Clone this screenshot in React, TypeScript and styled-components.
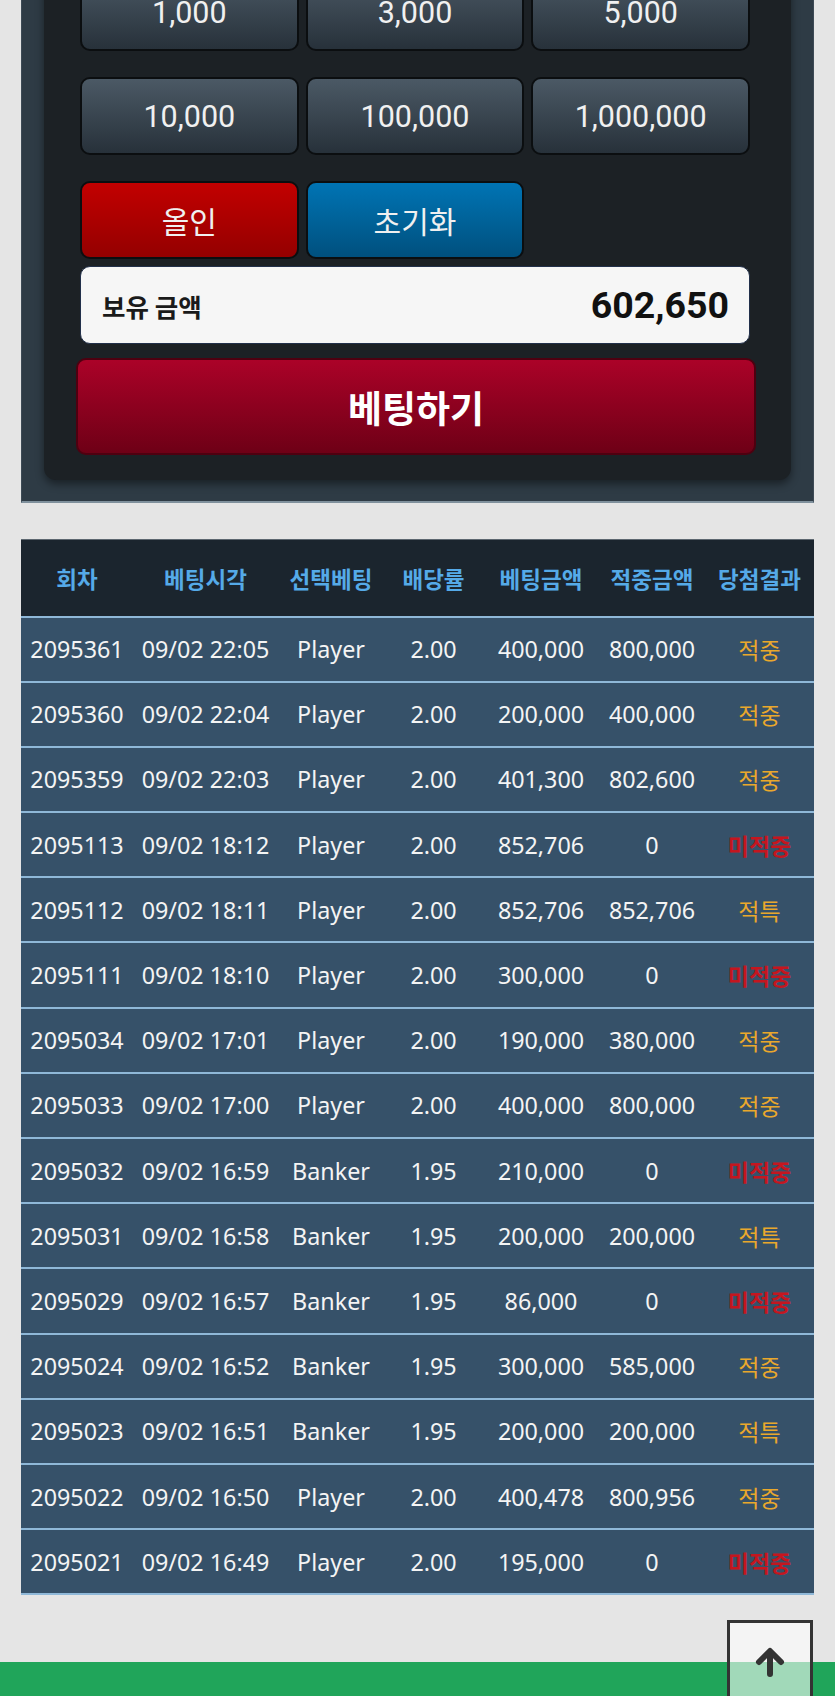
import React from 'react';
import styled, { createGlobalStyle } from 'styled-components';

const GlobalStyle = createGlobalStyle`
  * { box-sizing: border-box; }
  html, body {
    margin: 0;
    padding: 0;
    background: #e5e5e5;
    font-family: "Noto Sans", "Noto Sans CJK KR", sans-serif;
  }
`;

const Page = styled.div`
  margin-top: -79px;
  overflow: hidden;
`;

const BetPanel = styled.section`
  margin: 0 21px;
  padding: 22px 22px 21px;
  background: #2e3b45;
  border-left: 1px solid #3d4a55;
  border-right: 1px solid #3d4a55;
  border-bottom: 2px solid #7f909c;
`;

const BetInner = styled.div`
  padding: 30px 41px 25px 36px;
  background: #1c2125;
  border-radius: 12px;
  box-shadow: 0 4px 8px rgba(0, 0, 0, 0.45);
`;

const ChipGrid = styled.div`
  display: grid;
  grid-template-columns: repeat(3, 1fr);
  column-gap: 7px;
  row-gap: 26px;
`;

const tones = {
  gray: 'linear-gradient(to bottom, #4b5965, #27313a)',
  red: 'linear-gradient(to bottom, #c20000, #940000)',
  blue: 'linear-gradient(to bottom, #0074b4, #00507e)',
};

const ChipButton = styled.button<{ $tone: keyof typeof tones }>`
  height: 78px;
  border: 2px solid #0b0e10;
  border-radius: 10px;
  background: ${(p) => tones[p.$tone]};
  color: #f0f0f0;
  font-family: ${(p) =>
    p.$tone === 'gray' ? '"Roboto", sans-serif' : '"Noto Sans CJK KR", sans-serif'};
  font-size: ${(p) => (p.$tone === 'gray' ? '30.5px' : '30px')};
  font-weight: 400;
  display: flex;
  align-items: center;
  justify-content: center;
  padding: 0;
`;

const BalanceBox = styled.div`
  margin-top: 7px;
  height: 78px;
  padding: 0 20px 0 21px;
  background: #f6f6f6;
  border: 1px solid #22304a;
  border-radius: 10px;
  display: flex;
  align-items: center;
  justify-content: space-between;
`;

const BalanceLabel = styled.span`
  font-family: "Noto Sans CJK KR", sans-serif;
  font-weight: 700;
  font-size: 25.5px;
  color: #1a1a1a;
`;

const BalanceValue = styled.span`
  font-family: "Roboto", sans-serif;
  font-weight: 700;
  font-size: 37.5px;
  color: #111;
`;

const BetButton = styled.button`
  display: block;
  width: calc(100% + 10px);
  margin: 14px -6px 0 -4px;
  height: 97px;
  border: 2px solid #4e0010;
  border-radius: 10px;
  background: linear-gradient(to bottom, #ab0228, #6e0016);
  color: #fff;
  font-family: "Noto Sans CJK KR", sans-serif;
  font-weight: 700;
  font-size: 37px;
`;

const HistoryTable = styled.table`
  margin: 36px 21px 0;
  width: 793px;
  table-layout: fixed;
  border-collapse: collapse;
  border-top: 1px solid #5d6770;
`;

const HeadCell = styled.th`
  height: 77px;
  background: #1b252e;
  color: #55aae8;
  font-family: "Noto Sans CJK KR", sans-serif;
  font-weight: 700;
  font-size: 22.5px;
  text-align: center;
  padding: 0;
  border-bottom: 2px solid #8fb8d8;
  white-space: nowrap;
`;

const Row = styled.tr`
  background: #365169;
  border-bottom: 2px solid #8fb8d8;
`;

const Cell = styled.td`
  height: 65.2px;
  padding: 0;
  text-align: center;
  color: #f4f4f4;
  font-family: "Noto Sans", "Noto Sans CJK KR", sans-serif;
  font-size: 23.3px;
  white-space: nowrap;
`;

const resultColors = {
  '적중': '#eaa82c',
  '적특': '#eaa82c',
  '미적중': '#c4161f',
};

const ResultCell = styled(Cell)<{ $result: keyof typeof resultColors }>`
  color: ${(p) => resultColors[p.$result]};
  font-family: "Noto Sans CJK KR", sans-serif;
  font-size: 23px;
  font-weight: ${(p) => (p.$result === '미적중' ? 700 : 400)};
`;

const Footer = styled.footer`
  margin-top: 67px;
  height: 40px;
  background: #20a55a;
`;

const TopButton = styled.button`
  position: fixed;
  left: 727px;
  top: 1620px;
  width: 86px;
  height: 86px;
  border: 3px solid #333;
  background: rgba(255, 255, 255, 0.58);
  display: flex;
  align-items: center;
  justify-content: center;
  padding: 0;
  padding-bottom: 2px;
`;

const columns = [112, 145, 106, 99, 116, 106, 109];
const headers = ['회차', '베팅시각', '선택베팅', '배당률', '베팅금액', '적중금액', '당첨결과'];

type Bet = [string, string, string, string, string, string, keyof typeof resultColors];

const bets: Bet[] = [
  ['2095361', '09/02 22:05', 'Player', '2.00', '400,000', '800,000', '적중'],
  ['2095360', '09/02 22:04', 'Player', '2.00', '200,000', '400,000', '적중'],
  ['2095359', '09/02 22:03', 'Player', '2.00', '401,300', '802,600', '적중'],
  ['2095113', '09/02 18:12', 'Player', '2.00', '852,706', '0', '미적중'],
  ['2095112', '09/02 18:11', 'Player', '2.00', '852,706', '852,706', '적특'],
  ['2095111', '09/02 18:10', 'Player', '2.00', '300,000', '0', '미적중'],
  ['2095034', '09/02 17:01', 'Player', '2.00', '190,000', '380,000', '적중'],
  ['2095033', '09/02 17:00', 'Player', '2.00', '400,000', '800,000', '적중'],
  ['2095032', '09/02 16:59', 'Banker', '1.95', '210,000', '0', '미적중'],
  ['2095031', '09/02 16:58', 'Banker', '1.95', '200,000', '200,000', '적특'],
  ['2095029', '09/02 16:57', 'Banker', '1.95', '86,000', '0', '미적중'],
  ['2095024', '09/02 16:52', 'Banker', '1.95', '300,000', '585,000', '적중'],
  ['2095023', '09/02 16:51', 'Banker', '1.95', '200,000', '200,000', '적특'],
  ['2095022', '09/02 16:50', 'Player', '2.00', '400,478', '800,956', '적중'],
  ['2095021', '09/02 16:49', 'Player', '2.00', '195,000', '0', '미적중'],
];

const chips = ['1,000', '3,000', '5,000', '10,000', '100,000', '1,000,000'];

export default function App() {
  return (
    <>
      <GlobalStyle />
      <Page>
        <BetPanel>
          <BetInner>
            <ChipGrid>
              {chips.map((c) => (
                <ChipButton key={c} $tone="gray">{c}</ChipButton>
              ))}
              <ChipButton $tone="red">올인</ChipButton>
              <ChipButton $tone="blue">초기화</ChipButton>
            </ChipGrid>

            <BalanceBox>
              <BalanceLabel>보유 금액</BalanceLabel>
              <BalanceValue>602,650</BalanceValue>
            </BalanceBox>

            <BetButton>베팅하기</BetButton>
          </BetInner>
        </BetPanel>

        <HistoryTable>
          <colgroup>
            {columns.map((w, i) => (
              <col key={i} style={{ width: w }} />
            ))}
          </colgroup>
          <thead>
            <tr>
              {headers.map((h) => (
                <HeadCell key={h}>{h}</HeadCell>
              ))}
            </tr>
          </thead>
          <tbody>
            {bets.map((b) => (
              <Row key={b[0]}>
                <Cell>{b[0]}</Cell>
                <Cell>{b[1]}</Cell>
                <Cell>{b[2]}</Cell>
                <Cell>{b[3]}</Cell>
                <Cell>{b[4]}</Cell>
                <Cell>{b[5]}</Cell>
                <ResultCell $result={b[6]}>{b[6]}</ResultCell>
              </Row>
            ))}
          </tbody>
        </HistoryTable>

        <Footer />
      </Page>

      <TopButton aria-label="맨 위로">
        <svg width="30" height="30" viewBox="0 0 30 30">
          <path
            d="M15 27 V5 M4 15 L15 4 L26 15"
            fill="none"
            stroke="#333"
            strokeWidth="6"
            strokeLinecap="round"
            strokeLinejoin="round"
          />
        </svg>
      </TopButton>
    </>
  );
}
